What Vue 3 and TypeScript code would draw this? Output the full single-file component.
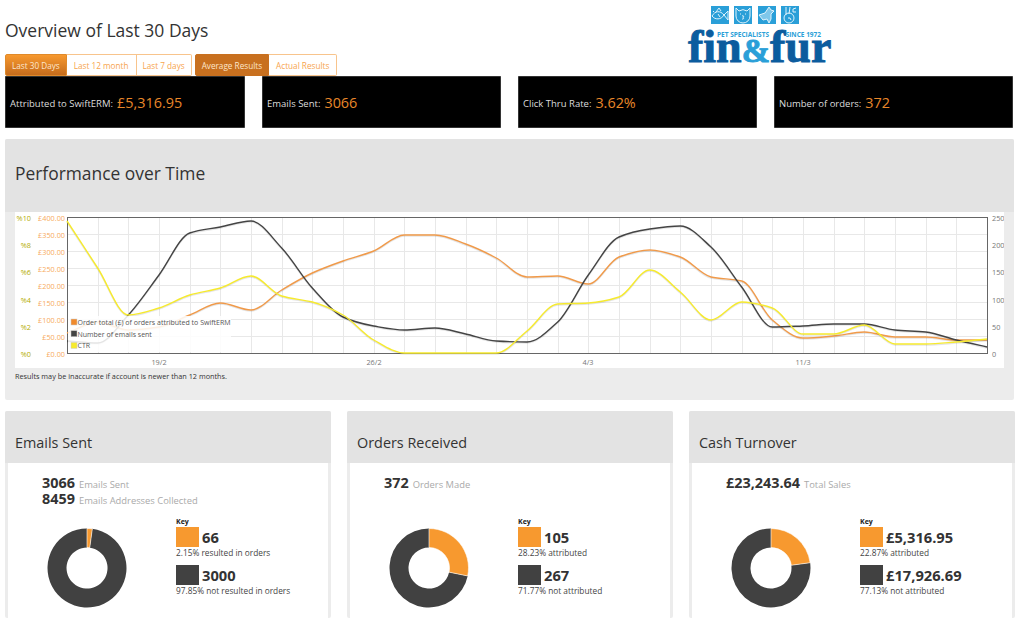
<!--
  App.vue: SwiftERM overview dashboard
-->
<template>
  <div class="page">
    <div class="top">
      <div class="top-left">
        <h1 class="title">Overview of Last 30 Days</h1>
        <div class="tabs">
          <div class="tab-group">
            <button v-for="t in periodTabs" :key="t" :class="['tab', { on: t === 'Last 30 Days' }]">{{ t }}</button>
          </div>
          <div class="tab-group">
            <button v-for="t in modeTabs" :key="t" :class="['tab', { 'on-dark': t === 'Average Results' }]">{{ t }}</button>
          </div>
        </div>
      </div>
      <div class="logo">
        <div class="logo-icons">
          <svg viewBox="0 0 18 18" class="ico"><rect width="18" height="18" fill="#2a9fd8"/><path d="M1 10c3-5 8-6 12-1-3 5-9 5-12 1zM13 9l4-4v9zM5 6l3-4 2 3M7 8l2 3M2 5l1 1" fill="none" stroke="#dff3fc" stroke-width="1"/></svg>
          <svg viewBox="0 0 18 18" class="ico"><rect width="18" height="18" fill="#2a9fd8"/><path d="M2 2l3 3a7 7 0 0 1 8 0l3-3v8a7 7 0 0 1-14 0zM6 8h1M11 8h1M8 10c2-1 2 1 1 1.500 1 0 1 2-1 1.500" fill="none" stroke="#dff3fc" stroke-width="1"/></svg>
          <svg viewBox="0 0 18 18" class="ico"><rect width="18" height="18" fill="#2a9fd8"/><path d="M1 9l6-2 4-6 2 3 3 1-3 3v5l-2 4-2-4-4 1z" fill="#7fc7ea" stroke="#dff3fc" stroke-width="1"/></svg>
          <svg viewBox="0 0 18 18" class="ico"><rect width="18" height="18" fill="#2a9fd8"/><path d="M5 1v8M9 1L8 8M15 2l-3 1v3h3M3 12a5 5 0 1 0 10 0 5 5 0 1 0-10 0zM7 12h2l1 2" fill="none" stroke="#dff3fc" stroke-width="1"/></svg>
        </div>
        <div class="logo-tag"><span>PET SPECIALISTS</span><span>SINCE 1972</span></div>
        <div class="logo-word">fin<em>&amp;</em>fur</div>
      </div>
    </div>

    <div class="summary">
      <div v-for="s in summary" :key="s.label" class="sum-card">
        <span class="sum-label">{{ s.label }}:</span>
        <span class="sum-value">{{ s.value }}</span>
      </div>
    </div>

    <section class="perf">
      <h2 class="perf-title">Performance over Time</h2>
      <div class="chart">
        <svg viewBox="15 212 989 156" width="989" height="156" class="chart-svg">
          <line v-for="x in gridX" :key="'x' + x" :x1="x" :x2="x" y1="217.5" y2="353.5" class="grid"/>
          <line v-for="y in gridY" :key="'y' + y" x1="67" x2="987" :y1="y" :y2="y" class="grid"/>
          <rect x="67.5" y="217.5" width="920" height="136" class="frame"/>
          <template v-for="l in lines" :key="l.color">
            <path :d="l.d" transform="translate(0 1)" class="shadow"/>
            <path :d="l.d" :stroke="l.color" class="line"/>
          </template>
          <rect x="68" y="316" width="163" height="36" fill="#fff" fill-opacity=".86"/>
          <g v-for="(g, i) in legend" :key="g.label">
            <rect x="71" :y="319 + i * 11.7" width="6" height="6" :fill="g.color" stroke="#ccc" stroke-width=".5"/>
            <text x="77.5" :y="325 + i * 11.7" class="t-legend">{{ g.label }}</text>
          </g>
          <text v-for="(t, i) in moneyTicks" :key="t" x="65" :y="221 + i * 17" class="t-money">{{ t }}</text>
          <text v-for="(t, i) in pctTicks" :key="t" x="31" :y="221 + i * 27.2" class="t-pct">{{ t }}</text>
          <text v-for="(t, i) in countTicks" :key="t" x="992" :y="221 + i * 27.2" class="t-axis">{{ t }}</text>
          <text v-for="t in dateTicks" :key="t.label" :x="t.x" y="365" class="t-date">{{ t.label }}</text>
        </svg>
      </div>
      <p class="note">Results may be inaccurate if account is newer than 12 months.</p>
    </section>

    <div class="cards">
      <section v-for="c in cards" :key="c.title" class="card">
        <h3 class="card-title">{{ c.title }}</h3>
        <div class="card-body">
          <div class="stats">
            <div v-for="s in c.stats" :key="s.label" class="stat"><b>{{ s.value }}</b><span>{{ s.label }}</span></div>
          </div>
          <div class="split">
            <svg viewBox="0 0 80 80" class="donut">
              <path :d="wedge(0, 1 - c.share)" :transform="`rotate(${c.share * 360} 40 40)`" fill="#414141"/>
              <path :d="wedge(0, c.share)" fill="#f7992f" stroke="#fff" stroke-width=".6"/>
            </svg>
            <div class="key">
              <div class="key-head">Key</div>
              <div v-for="k in c.keys" :key="k.note" class="key-row">
                <div class="key-top"><i :class="['swatch', k.cls]"></i><strong>{{ k.value }}</strong></div>
                <div class="key-note">{{ k.note }}</div>
              </div>
            </div>
          </div>
        </div>
      </section>
    </div>
  </div>
</template>

<script setup lang="ts">
const periodTabs = ['Last 30 Days', 'Last 12 month', 'Last 7 days']
const modeTabs = ['Average Results', 'Actual Results']

const summary = [
  { label: 'Attributed to SwiftERM', value: '£5,316.95' },
  { label: 'Emails Sent', value: '3066' },
  { label: 'Click Thru Rate', value: '3.62%' },
  { label: 'Number of orders', value: '372' },
]

const step = 920 / 30
const xAt = (i: number) => 67 + step * i
const gridX = Array.from({ length: 31 }, (_, i) => Math.round(xAt(i)) + 0.5)
const gridY = Array.from({ length: 9 }, (_, i) => 217.5 + i * 17)

const orange = [333, 322, 330, 327, 315, 303, 310, 290, 273, 261, 251, 235, 235, 244, 258, 277, 276, 284, 257, 250, 257, 277, 281, 320, 338, 336, 332, 337, 337, 340, 340]
const dark = [341, 343, 315, 275, 233, 227, 221, 248, 288, 317, 326, 330, 328, 334, 341, 342, 322, 275, 237, 229, 226, 247, 287, 327, 326, 324, 324, 330, 332, 340, 347]
const ctr = [221, 268, 315, 308, 295, 288, 276, 296, 302, 315, 340, 353, 353, 353, 353, 331, 304, 303, 297, 270, 292, 320, 302, 308, 334, 334, 325, 344, 344, 342, 339]

// monotone cubic, so flat runs stay flat
function smooth(ys: number[]): string {
  const slopes = ys.slice(1).map((y, i) => (y - ys[i]) / step)
  const tan = ys.map((_, i) => {
    if (i === 0) return slopes[0]
    if (i === ys.length - 1) return slopes[i - 1]
    const a = slopes[i - 1]
    const b = slopes[i]
    return a * b <= 0 ? 0 : (2 * a * b) / (a + b)
  })
  let d = `M${xAt(0)} ${ys[0]}`
  for (let i = 1; i < ys.length; i++) {
    const c = step / 3
    d += `C${(xAt(i - 1) + c).toFixed(1)} ${(ys[i - 1] + tan[i - 1] * c).toFixed(1)} ${(xAt(i) - c).toFixed(1)} ${(ys[i] - tan[i] * c).toFixed(1)} ${xAt(i).toFixed(1)} ${ys[i]}`
  }
  return d
}

const lines = [
  { color: '#f09a4a', d: smooth(orange) },
  { color: '#444444', d: smooth(dark) },
  { color: '#f6ea2e', d: smooth(ctr) },
]
const legend = [
  { color: '#f08a2c', label: 'Order total (£) of orders attributed to SwiftERM' },
  { color: '#444444', label: 'Number of emails sent' },
  { color: '#f6ea2e', label: 'CTR' },
]
const moneyTicks = ['£400.00', '£350.00', '£300.00', '£250.00', '£200.00', '£150.00', '£100.00', '£50.00', '£0.00']
const pctTicks = ['%10', '%8', '%6', '%4', '%2', '%0']
const countTicks = ['250', '200', '150', '100', '50', '0']
const dateTicks = [
  { label: '19/2', x: 159 },
  { label: '26/2', x: 374 },
  { label: '4/3', x: 588 },
  { label: '11/3', x: 803 },
]

const cards = [
  {
    title: 'Emails Sent',
    share: 0.0215,
    stats: [
      { value: '3066', label: 'Emails Sent' },
      { value: '8459', label: 'Emails Addresses Collected' },
    ],
    keys: [
      { cls: 'sw-o', value: '66', note: '2.15% resulted in orders' },
      { cls: 'sw-d', value: '3000', note: '97.85% not resulted in orders' },
    ],
  },
  {
    title: 'Orders Received',
    share: 0.2823,
    stats: [{ value: '372', label: 'Orders Made' }],
    keys: [
      { cls: 'sw-o', value: '105', note: '28.23% attributed' },
      { cls: 'sw-d', value: '267', note: '71.77% not attributed' },
    ],
  },
  {
    title: 'Cash Turnover',
    share: 0.2287,
    stats: [{ value: '£23,243.64', label: 'Total Sales' }],
    keys: [
      { cls: 'sw-o', value: '£5,316.95', note: '22.87% attributed' },
      { cls: 'sw-d', value: '£17,926.69', note: '77.13% not attributed' },
    ],
  },
]

// ring segment from fraction a to b, clockwise from 12 o'clock
function wedge(a: number, b: number): string {
  const R = 39.5
  const r = 20.5
  const pt = (f: number, rad: number) => {
    const t = f * Math.PI * 2
    return `${(40 + rad * Math.sin(t)).toFixed(2)} ${(40 - rad * Math.cos(t)).toFixed(2)}`
  }
  const large = b - a > 0.5 ? 1 : 0
  return `M${pt(a, R)}A${R} ${R} 0 ${large} 1 ${pt(b, R)}L${pt(b, r)}A${r} ${r} 0 ${large} 0 ${pt(a, r)}Z`
}
</script>

<style>
html, body { margin: 0; background: #fff; overflow: hidden; }
</style>

<style scoped>
.page { width: 1024px; height: 618px; overflow: hidden; font-family: "Open Sans", "Noto Sans", sans-serif; color: #333; }
.top { display: flex; height: 76px; padding-left: 5px; }
.top-left { width: 683px; }
.title { margin: 0; padding-top: 18px; height: 36px; font-size: 17.5px; line-height: 24px; font-weight: 400; color: #333; }
.tabs { display: flex; gap: 3px; }
.tab-group { display: flex; }
.tab { height: 22px; padding: 0 6px; border: 1px solid #f8c48c; border-left-width: 0; background: #fff; color: #f7a44e; font: 400 8.2px "Open Sans", sans-serif; white-space: nowrap; }
.tab:nth-child(2) { padding: 0 7px; }
.tab:first-child { border-left-width: 1px; border-radius: 2px 0 0 2px; }
.tab:last-child { border-radius: 0 2px 2px 0; }
.tab.on { background: linear-gradient(#f7992f, #c56c1c); border-color: #e08a2a; color: #fde6cc; }
.tab.on-dark { background: #c8701f; border-color: #c8701f; color: #fde6cc; }

.logo { position: relative; width: 144px; }
.logo-icons { display: flex; gap: 5.3px; padding: 6px 0 0 23px; }
.ico { width: 18px; height: 18px; display: block; }
.logo-tag { position: absolute; left: 29px; top: 31px; width: 104px; display: flex; justify-content: space-between; font: 700 6.5px/7px "Open Sans", sans-serif; color: #2a9fd8; white-space: nowrap; }
.logo-word { position: absolute; left: 0; top: 22px; font: 700 46px/50px "Liberation Serif", serif; color: #0b5c9e; -webkit-text-stroke: .9px #0b5c9e; white-space: nowrap; }
.logo-word em { font-style: normal; font-size: 34px; color: #2a9fd8; -webkit-text-stroke-color: #2a9fd8; }

.summary { display: grid; grid-template-columns: 240px 239px 239px 239px; column-gap: 17px; padding-left: 5px; }
.sum-card { height: 52px; background: #000; display: flex; align-items: center; gap: 4px; padding-left: 5px; border-radius: 1px; box-shadow: 0 0 0 .5px #666 inset; }
.sum-label { font-size: 9.5px; color: #ddd; padding-top: 3px; }
.sum-value { font-size: 14.4px; color: #e8872a; }

.perf { margin: 11px 10px 0 5px; height: 261px; background: #ececec; border-radius: 2px; }
.perf-title { margin: 0; height: 73px; padding-left: 10px; background: #e3e3e3; font-size: 17.4px; line-height: 69px; font-weight: 400; color: #333; border-radius: 2px 2px 0 0; box-sizing: border-box; }
.chart { margin: 0 10px; height: 156px; background: #fff; }
.chart-svg { display: block; }
.grid { stroke: #e8e8e8; stroke-width: 1; }
.frame { fill: none; stroke: #666; stroke-width: 1; }
.shadow { fill: none; stroke: #000; stroke-opacity: .1; stroke-width: 1.5; }
.line { fill: none; stroke-width: 1.4; }
.chart-svg text { font-family: "Open Sans", sans-serif; }
.t-legend { font-size: 7px; fill: #555; }
.t-money { font-size: 7.3px; fill: #f7ab60; text-anchor: end; }
.t-pct { font-size: 7.3px; fill: #b3ac00; text-anchor: end; }
.t-axis { font-size: 7.3px; fill: #777; }
.t-date { font-size: 7.3px; fill: #777; text-anchor: middle; }
.note { margin: 0; padding: 3px 0 0 10px; font-size: 7.3px; line-height: 11px; color: #333; }

.cards { display: grid; grid-template-columns: repeat(3, 326px); column-gap: 16px; margin: 11px 0 0 5px; }
.card { background: #ececec; border-radius: 2px; height: 207px; padding: 0 3px; }
.card-title { margin: 0 -3px; height: 52px; padding: 17px 0 0 10px; box-sizing: border-box; background: #e3e3e3; font-size: 14.4px; line-height: 30px; font-weight: 400; color: #333; border-radius: 2px 2px 0 0; }
.card-body { background: #fff; height: 155px; }
.stats { height: 54px; padding: 12px 0 0 34px; box-sizing: border-box; }
.stat { display: flex; align-items: baseline; gap: 4px; height: 16px; line-height: 16px; }
.stat b { font-size: 14.4px; font-weight: 700; color: #333; }
.stat span { font-size: 9.4px; color: #aaa; }
.split { display: flex; padding-left: 39px; }
.donut { width: 80px; height: 80px; margin-top: 11px; flex: none; }
.key { margin-left: 49px; }
.key-head { font-size: 7px; font-weight: 700; line-height: 10px; color: #222; }
.key-row { margin-bottom: 7px; }
.key-top { display: flex; align-items: center; gap: 3px; }
.swatch { display: block; width: 23px; height: 20px; }
.sw-o { background: #f7992f; }
.sw-d { background: #414141; }
.key-top strong { font-size: 14.7px; font-weight: 700; color: #333; }
.key-note { font-size: 8.3px; line-height: 11px; color: #444; white-space: nowrap; }
</style>
